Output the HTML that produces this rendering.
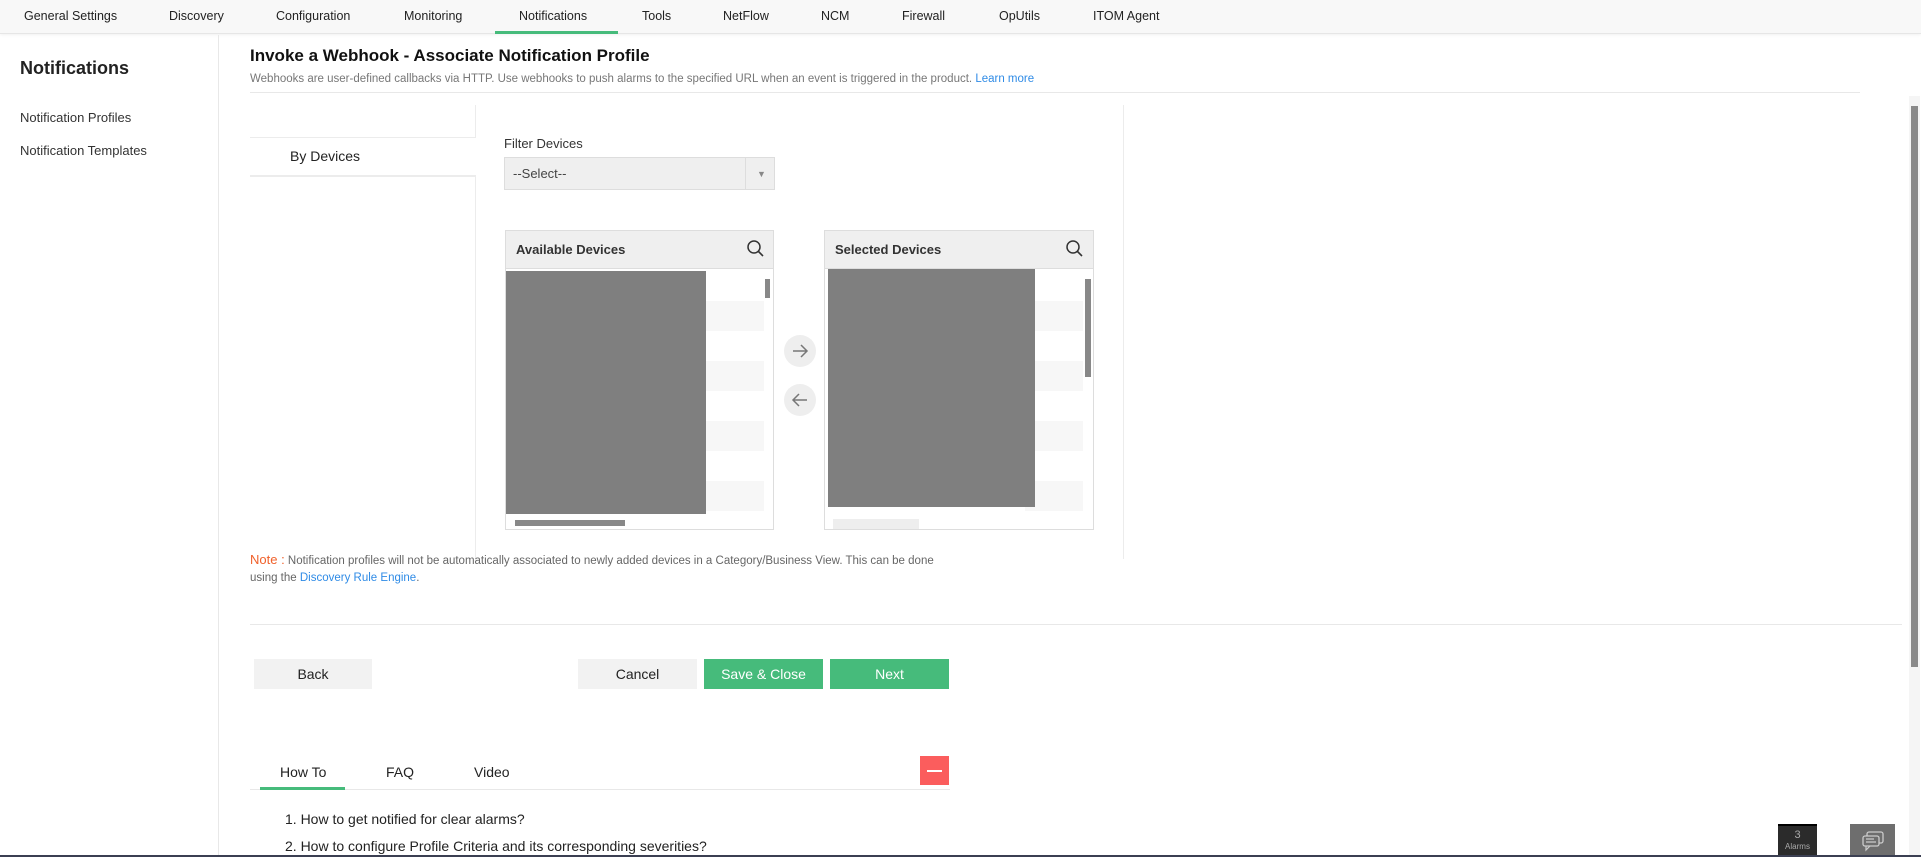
<!DOCTYPE html>
<html><head><meta charset="utf-8"><style>
*{box-sizing:border-box;margin:0;padding:0}
body{width:1921px;height:857px;overflow:hidden;background:#fff;font-family:"Liberation Sans",sans-serif;color:#222;position:relative}
.a{position:absolute}
.nav{left:0;top:0;width:1921px;height:34px;background:#f8f8f8;border-bottom:1px solid #e6e6e6;box-shadow:0 1px 3px rgba(0,0,0,.06)}
.nav span{position:absolute;top:9px;font-size:12.5px;color:#222;white-space:nowrap}
.btn{position:absolute;top:659px;height:30px;width:119px;font-size:14px;text-align:center;line-height:30px}
.g{background:#46bb7b;color:#fff}.l{background:#f2f2f2;color:#222}
.box{border:1px solid #ddd;background:#fff}
</style></head><body>
<div class="a nav">
<span style="left:24px">General Settings</span>
<span style="left:169px">Discovery</span>
<span style="left:276px">Configuration</span>
<span style="left:404px">Monitoring</span>
<span style="left:519px">Notifications</span>
<span style="left:642px">Tools</span>
<span style="left:723px">NetFlow</span>
<span style="left:821px">NCM</span>
<span style="left:902px">Firewall</span>
<span style="left:999px">OpUtils</span>
<span style="left:1093px">ITOM Agent</span>
</div>
<div class="a" style="left:495px;top:31px;width:123px;height:3px;background:#46bb7b"></div>
<div class="a" style="left:218px;top:35px;width:1px;height:822px;background:#e8e8e8"></div>
<div class="a" style="left:20px;top:58px;font-size:18px;font-weight:bold">Notifications</div>
<div class="a" style="left:20px;top:110px;font-size:13px;color:#333">Notification Profiles</div>
<div class="a" style="left:20px;top:143px;font-size:13px;color:#333">Notification Templates</div>

<div class="a" style="left:250px;top:46px;font-size:17px;font-weight:bold;color:#111">Invoke a Webhook - Associate Notification Profile</div>
<div class="a" style="left:250px;top:73px;font-size:11.5px;color:#777;white-space:nowrap">Webhooks are user-defined callbacks via HTTP. Use webhooks to push alarms to the specified URL when an event is triggered in the product. <span style="color:#2f8be6">Learn more</span></div>
<div class="a" style="left:250px;top:92px;width:1610px;height:1px;background:#e8e8e8"></div>

<div class="a" style="left:475px;top:105px;width:1px;height:454px;background:#ececec"></div>
<div class="a" style="left:1123px;top:105px;width:1px;height:454px;background:#ececec"></div>
<div class="a" style="left:250px;top:137px;width:226px;height:40px;background:#fff;border-top:1px solid #ececec;border-bottom:2px solid #ececec;font-size:14px;padding:10px 0 0 40px">By Devices</div>

<div class="a" style="left:504px;top:136px;font-size:13px;color:#333">Filter Devices</div>
<div class="a" style="left:504px;top:157px;width:271px;height:33px;background:#efefef;border:1px solid #ddd;font-size:13px;color:#444;padding:8px 0 0 8px">--Select--<div class="a" style="left:240px;top:0;width:1px;height:31px;background:#ddd"></div><div class="a" style="left:252px;top:11px;font-size:9px;color:#888">▼</div></div>

<div class="a box" style="left:505px;top:230px;width:269px;height:300px;overflow:hidden">
<div style="height:38px;background:#efefef;border-bottom:1px solid #ddd;font-size:13px;font-weight:bold;padding:11px 0 0 10px;color:#333">Available Devices</div>
<div class="a" style="left:200px;top:70px;width:210px;height:30px;background:#f7f7f7"></div>
<div class="a" style="left:200px;top:130px;width:210px;height:30px;background:#f7f7f7"></div>
<div class="a" style="left:200px;top:190px;width:210px;height:30px;background:#f7f7f7"></div>
<div class="a" style="left:200px;top:250px;width:210px;height:30px;background:#f7f7f7"></div>
<div class="a" style="left:0;top:40px;width:200px;height:243px;background:#7f7f7f"></div>
<div class="a" style="left:258px;top:40px;width:10px;height:243px;background:#fff"></div>
<div class="a" style="left:259px;top:48px;width:5px;height:19px;background:#888"></div>
<div class="a" style="left:0;top:284px;width:268px;height:15px;background:#fff"></div>
<div class="a" style="left:9px;top:289px;width:110px;height:6px;background:#888"></div>
</div>
<div class="a box" style="left:824px;top:230px;width:270px;height:300px;overflow:hidden">
<div style="height:38px;background:#efefef;border-bottom:1px solid #ddd;font-size:13px;font-weight:bold;padding:11px 0 0 10px;color:#333">Selected Devices</div>
<div class="a" style="left:200px;top:70px;width:210px;height:30px;background:#f7f7f7"></div>
<div class="a" style="left:200px;top:130px;width:210px;height:30px;background:#f7f7f7"></div>
<div class="a" style="left:200px;top:190px;width:210px;height:30px;background:#f7f7f7"></div>
<div class="a" style="left:200px;top:250px;width:210px;height:30px;background:#f7f7f7"></div>
<div class="a" style="left:3px;top:38px;width:207px;height:238px;background:#7f7f7f"></div>
<div class="a" style="left:258px;top:38px;width:11px;height:260px;background:#fff"></div>
<div class="a" style="left:260px;top:48px;width:6px;height:98px;background:#888"></div>
<div class="a" style="left:8px;top:288px;width:86px;height:11px;background:#eee"></div>
</div>
<svg class="a" style="left:783px;top:334px" width="34" height="84"><circle cx="17" cy="17" r="16" fill="#eee"/><circle cx="17" cy="66" r="16" fill="#eee"/><path d="M10 17h14M18 11l6 6-6 6M24 66H10M16 60l-6 6 6 6" stroke="#777" stroke-width="1.5" fill="none"/></svg>
<svg class="a" style="left:746px;top:239px" width="20" height="20"><circle cx="8" cy="8" r="6" stroke="#333" stroke-width="1.5" fill="none"/><path d="M12.5 12.5l4.5 4.5" stroke="#333" stroke-width="1.6"/></svg>
<svg class="a" style="left:1065px;top:239px" width="20" height="20"><circle cx="8" cy="8" r="6" stroke="#333" stroke-width="1.5" fill="none"/><path d="M12.5 12.5l4.5 4.5" stroke="#333" stroke-width="1.6"/></svg>

<div class="a" style="left:250px;top:551px;font-size:11.5px;color:#666;white-space:nowrap;line-height:17px"><span style="color:#f0612b;font-size:13px">Note :</span> Notification profiles will not be automatically associated to newly added devices in a Category/Business View. This can be done<br>using the <span style="color:#2f8be6">Discovery Rule Engine</span>.</div>
<div class="a" style="left:250px;top:624px;width:1652px;height:1px;background:#e8e8e8"></div>

<div class="btn l" style="left:254px;width:118px">Back</div>
<div class="btn l" style="left:578px">Cancel</div>
<div class="btn g" style="left:704px">Save &amp; Close</div>
<div class="btn g" style="left:830px">Next</div>

<div class="a" style="left:280px;top:764px;font-size:14px">How To</div>
<div class="a" style="left:386px;top:764px;font-size:14px">FAQ</div>
<div class="a" style="left:474px;top:764px;font-size:14px">Video</div>
<div class="a" style="left:250px;top:789px;width:700px;height:1px;background:#e8e8e8"></div>
<div class="a" style="left:260px;top:787px;width:85px;height:3px;background:#46bb7b"></div>
<div class="a" style="left:920px;top:756px;width:29px;height:29px;background:#fb5d5d"><div class="a" style="left:7px;top:14px;width:15px;height:2px;background:#fff"></div></div>
<div class="a" style="left:285px;top:811px;font-size:14px">1. How to get notified for clear alarms?</div>
<div class="a" style="left:285px;top:838px;font-size:14px">2. How to configure Profile Criteria and its corresponding severities?</div>

<div class="a" style="left:1909px;top:96px;width:11px;height:761px;background:#f5f5f5"></div>
<div class="a" style="left:1911px;top:106px;width:7px;height:561px;background:#8a8a8a"></div>
<div class="a" style="left:1778px;top:824px;width:39px;height:33px;background:#2b2b2b;border-top:2px solid #000;color:#aaa;text-align:center;font-size:11px;line-height:11px;padding-top:4px">3<br><span style="font-size:8px">Alarms</span></div>
<div class="a" style="left:1850px;top:824px;width:45px;height:33px;background:#6e6e6e"></div>
<svg class="a" style="left:1861px;top:830px" width="24" height="22"><rect x="6" y="2" width="16" height="11" rx="2" stroke="#ccc" fill="none" stroke-width="1.3"/><rect x="2" y="6" width="16" height="10" rx="2" fill="#6e6e6e" stroke="#ccc" stroke-width="1.3"/><path d="M5 9h8M5 12h10M5 16l0 4 4-4" stroke="#ccc" fill="none" stroke-width="1.2"/></svg>
<div class="a" style="left:0;top:855px;width:1921px;height:2px;background:#3b3f52"></div>
</body></html>
